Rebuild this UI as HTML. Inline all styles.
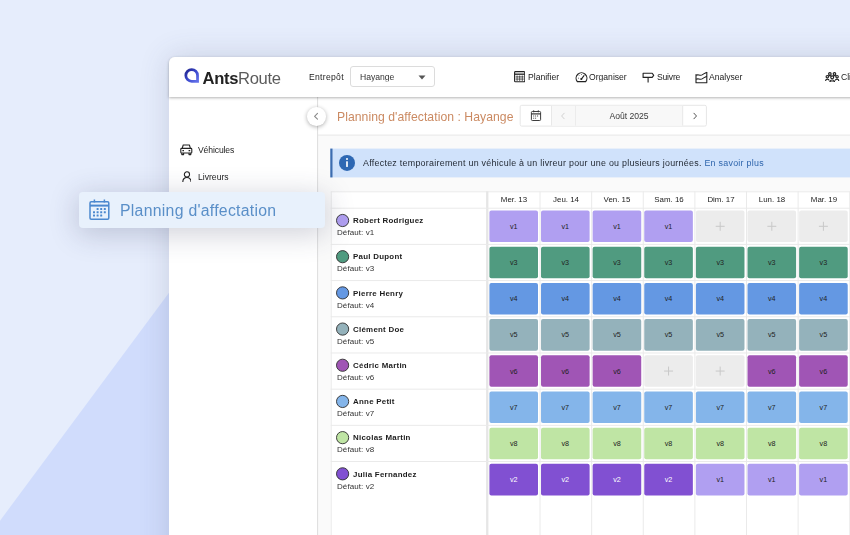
<!DOCTYPE html>
<html lang="fr"><head><meta charset="utf-8"><title>AntsRoute - Planning d'affectation</title>
<style>
*{box-sizing:border-box;margin:0;padding:0}
html,body{width:850px;height:535px;overflow:hidden}
body{background:#e6edfc;font-family:"Liberation Sans",sans-serif;color:#222;position:relative}
.bg{position:absolute;left:0;top:0;width:850px;height:535px}
.win{position:absolute;left:168.8px;top:56.5px;width:720px;height:520px;background:#fff;border-top-left-radius:6px;box-shadow:0 0 30px 0 rgba(70,72,105,.19)}
.hdr{position:absolute;left:168.8px;top:56.5px;width:720px;height:40.5px;background:#fff;border-top-left-radius:6px;box-shadow:0 1px 3px rgba(0,0,0,.30)}
.a{position:absolute}
.t{position:absolute;white-space:nowrap;line-height:1;transform:translateY(-52%);will-change:transform}
.c{position:absolute;white-space:nowrap;line-height:1;transform:translate(-50%,-52%);will-change:transform}
.nav{font-size:8.6px;color:#222}
.cell{position:absolute;border-radius:2px;width:48.6px;height:31.6px}
.cell span{position:absolute;left:50%;top:50%;transform:translate(-50%,-54%);font-size:7px;line-height:1;white-space:nowrap}
.plus{background:#ebebeb}
.plus i{position:absolute;left:50%;top:50%;width:9px;height:9px;transform:translate(-50%,-50%)}
.plus i:before,.plus i:after{content:"";position:absolute;background:#c4c4c4}
.plus i:before{left:0;top:4px;width:9px;height:1px}
.plus i:after{left:4px;top:0;width:1px;height:9px}
.hl{position:absolute;background:#e6e6e6;height:1px}
.vl{position:absolute;background:#e6e6e6;width:1px}
.av{position:absolute;width:13px;height:13px;border-radius:50%;border:1px solid #333}
.nm{font-weight:bold;font-size:7.9px;letter-spacing:.27px;color:#1c1c1c}
.df{font-size:8px;letter-spacing:.08px;color:#333}
.dh{font-size:7.9px;color:#222}
</style></head><body>
<svg class="bg" viewBox="0 0 850 535"><polygon points="0,520.7 168.8,293 400,293 400,535 0,535" fill="#d0dcfc"/></svg>
<div class="win"></div>
<!-- content area -->
<svg class="bg" viewBox="0 0 850 535">
<rect x="318" y="135.5" width="540" height="420" fill="#fafafa"/>
<rect x="317.1" y="97" width="1" height="440" fill="#dddddd"/>
<rect x="318" y="134.6" width="540" height="1" fill="#e6e6e6"/>
<rect x="330.3" y="148.6" width="530" height="28.8" fill="#d0e2fb"/>
<rect x="330.3" y="148.6" width="2.2" height="28.8" fill="#3d6db0"/>
<circle cx="347" cy="162.9" r="8" fill="#2e68b3"/>
<circle cx="347" cy="159" r="1" fill="#fff"/>
<rect x="346.15" y="161.2" width="1.7" height="5.8" rx=".4" fill="#fff"/>
</svg>

<div class="a" style="left:307.2px;top:107.4px;width:18.6px;height:18.6px;border-radius:50%;background:#fff;box-shadow:0 1px 4px rgba(0,0,0,.32)">
<svg class="a" style="left:0;top:0" width="18.6" height="18.6" viewBox="0 0 18.6 18.6"><path d="M10.5 6.4 L7.6 9.3 L10.5 12.2" fill="none" stroke="#8a8a8a" stroke-width="1.1" stroke-linecap="round" stroke-linejoin="round"/></svg></div>
<div class="t" id="title" style="left:337.2px;top:117px;font-size:12.2px;letter-spacing:.05px;color:#cb8a62">Planning d'affectation : Hayange</div>
<svg class="bg" viewBox="0 0 850 535">
<rect x="520.2" y="105.3" width="186.2" height="20.8" rx="1.5" fill="#fff" stroke="#e6e6e6" stroke-width="1"/>
<rect x="551.5" y="105.8" width="131.2" height="19.8" fill="#f8f8f8"/>
<rect x="551" y="105.8" width="1" height="19.8" fill="#e8e8e8"/>
<rect x="575" y="105.8" width="1" height="19.8" fill="#ececec"/>
<rect x="682.2" y="105.8" width="1" height="19.8" fill="#e8e8e8"/>
<g fill="none" stroke="#333" stroke-width=".95"><rect x="531.4" y="111.5" width="9.2" height="9" rx=".9"/><path d="M531.4 113.9H540.6" stroke-width="1.2"/><path d="M533.7 110.3V112.3M538.3 110.3V112.3"/><path d="M533.2 116H539M533.2 118.2H537" stroke-width=".9" stroke-dasharray="1 .9"/></g>
<path d="M564.2 113.2 L561.6 116 L564.2 118.8" fill="none" stroke="#d2d2d2" stroke-width="1" stroke-linecap="round" stroke-linejoin="round"/>
<path d="M693.9 113.2 L696.5 116 L693.9 118.8" fill="none" stroke="#555" stroke-width="1" stroke-linecap="round" stroke-linejoin="round"/>
</svg>
<div class="c" id="aout" style="left:629px;top:116.1px;font-size:8.6px;color:#3a3a3a">Août 2025</div>

<div class="t" id="info" style="left:363.1px;top:164.4px;font-size:8.9px;letter-spacing:.27px;color:#1f2630">Affectez temporairement un véhicule à un livreur pour une ou plusieurs journées. <span id="esp" style="color:#2f66ad">En savoir plus</span></div>

<svg class="bg" viewBox="0 0 850 535" style="font-family:'Liberation Sans',sans-serif">
<rect x="330.7" y="191.3" width="540" height="360" fill="#fff"/>
<rect x="330.7" y="191.3" width="540" height="1" fill="#eaeaea"/>
<rect x="330.7" y="191.3" width="1" height="360" fill="#eaeaea"/>
<rect x="486.1" y="191.3" width="2.3" height="360" fill="#e6e6e6"/>
<rect x="539.52" y="191.3" width="1" height="360" fill="#eaeaea"/>
<rect x="591.14" y="191.3" width="1" height="360" fill="#eaeaea"/>
<rect x="642.76" y="191.3" width="1" height="360" fill="#eaeaea"/>
<rect x="694.38" y="191.3" width="1" height="360" fill="#eaeaea"/>
<rect x="746.00" y="191.3" width="1" height="360" fill="#eaeaea"/>
<rect x="797.62" y="191.3" width="1" height="360" fill="#eaeaea"/>
<rect x="849.24" y="191.3" width="1" height="360" fill="#eaeaea"/>
<rect x="330.7" y="207.70" width="540" height="1" fill="#eaeaea"/>
<rect x="330.7" y="243.89" width="540" height="1" fill="#eaeaea"/>
<rect x="330.7" y="280.08" width="540" height="1" fill="#eaeaea"/>
<rect x="330.7" y="316.27" width="540" height="1" fill="#eaeaea"/>
<rect x="330.7" y="352.46" width="540" height="1" fill="#eaeaea"/>
<rect x="330.7" y="388.65" width="540" height="1" fill="#eaeaea"/>
<rect x="330.7" y="424.84" width="540" height="1" fill="#eaeaea"/>
<rect x="330.7" y="461.03" width="540" height="1" fill="#eaeaea"/>
<circle cx="342.6" cy="220.50" r="6.1" fill="#b09ff1" stroke="#2e2e2e" stroke-width="0.9"/>
<rect x="489.40" y="210.50" width="48.6" height="31.6" rx="2" fill="#b09ff1"/>
<text x="513.70" y="228.90" text-anchor="middle" font-size="7.2" fill="#222">v1</text>
<rect x="541.02" y="210.50" width="48.6" height="31.6" rx="2" fill="#b09ff1"/>
<text x="565.32" y="228.90" text-anchor="middle" font-size="7.2" fill="#222">v1</text>
<rect x="592.64" y="210.50" width="48.6" height="31.6" rx="2" fill="#b09ff1"/>
<text x="616.94" y="228.90" text-anchor="middle" font-size="7.2" fill="#222">v1</text>
<rect x="644.26" y="210.50" width="48.6" height="31.6" rx="2" fill="#b09ff1"/>
<text x="668.56" y="228.90" text-anchor="middle" font-size="7.2" fill="#222">v1</text>
<rect x="695.88" y="210.50" width="48.6" height="31.6" rx="2" fill="#ececec"/>
<path d="M715.68 226.30H724.68M720.18 221.80V230.80" stroke="#c9c9c9" stroke-width="1" fill="none"/>
<rect x="747.50" y="210.50" width="48.6" height="31.6" rx="2" fill="#ececec"/>
<path d="M767.30 226.30H776.30M771.80 221.80V230.80" stroke="#c9c9c9" stroke-width="1" fill="none"/>
<rect x="799.12" y="210.50" width="48.6" height="31.6" rx="2" fill="#ececec"/>
<path d="M818.92 226.30H827.92M823.42 221.80V230.80" stroke="#c9c9c9" stroke-width="1" fill="none"/>
<circle cx="342.6" cy="256.69" r="6.1" fill="#509b80" stroke="#2e2e2e" stroke-width="0.9"/>
<rect x="489.40" y="246.69" width="48.6" height="31.6" rx="2" fill="#509b80"/>
<text x="513.70" y="265.09" text-anchor="middle" font-size="7.2" fill="#222">v3</text>
<rect x="541.02" y="246.69" width="48.6" height="31.6" rx="2" fill="#509b80"/>
<text x="565.32" y="265.09" text-anchor="middle" font-size="7.2" fill="#222">v3</text>
<rect x="592.64" y="246.69" width="48.6" height="31.6" rx="2" fill="#509b80"/>
<text x="616.94" y="265.09" text-anchor="middle" font-size="7.2" fill="#222">v3</text>
<rect x="644.26" y="246.69" width="48.6" height="31.6" rx="2" fill="#509b80"/>
<text x="668.56" y="265.09" text-anchor="middle" font-size="7.2" fill="#222">v3</text>
<rect x="695.88" y="246.69" width="48.6" height="31.6" rx="2" fill="#509b80"/>
<text x="720.18" y="265.09" text-anchor="middle" font-size="7.2" fill="#222">v3</text>
<rect x="747.50" y="246.69" width="48.6" height="31.6" rx="2" fill="#509b80"/>
<text x="771.80" y="265.09" text-anchor="middle" font-size="7.2" fill="#222">v3</text>
<rect x="799.12" y="246.69" width="48.6" height="31.6" rx="2" fill="#509b80"/>
<text x="823.42" y="265.09" text-anchor="middle" font-size="7.2" fill="#222">v3</text>
<circle cx="342.6" cy="292.88" r="6.1" fill="#6498e3" stroke="#2e2e2e" stroke-width="0.9"/>
<rect x="489.40" y="282.88" width="48.6" height="31.6" rx="2" fill="#6498e3"/>
<text x="513.70" y="301.28" text-anchor="middle" font-size="7.2" fill="#222">v4</text>
<rect x="541.02" y="282.88" width="48.6" height="31.6" rx="2" fill="#6498e3"/>
<text x="565.32" y="301.28" text-anchor="middle" font-size="7.2" fill="#222">v4</text>
<rect x="592.64" y="282.88" width="48.6" height="31.6" rx="2" fill="#6498e3"/>
<text x="616.94" y="301.28" text-anchor="middle" font-size="7.2" fill="#222">v4</text>
<rect x="644.26" y="282.88" width="48.6" height="31.6" rx="2" fill="#6498e3"/>
<text x="668.56" y="301.28" text-anchor="middle" font-size="7.2" fill="#222">v4</text>
<rect x="695.88" y="282.88" width="48.6" height="31.6" rx="2" fill="#6498e3"/>
<text x="720.18" y="301.28" text-anchor="middle" font-size="7.2" fill="#222">v4</text>
<rect x="747.50" y="282.88" width="48.6" height="31.6" rx="2" fill="#6498e3"/>
<text x="771.80" y="301.28" text-anchor="middle" font-size="7.2" fill="#222">v4</text>
<rect x="799.12" y="282.88" width="48.6" height="31.6" rx="2" fill="#6498e3"/>
<text x="823.42" y="301.28" text-anchor="middle" font-size="7.2" fill="#222">v4</text>
<circle cx="342.6" cy="329.07" r="6.1" fill="#94b2bb" stroke="#2e2e2e" stroke-width="0.9"/>
<rect x="489.40" y="319.07" width="48.6" height="31.6" rx="2" fill="#94b2bb"/>
<text x="513.70" y="337.47" text-anchor="middle" font-size="7.2" fill="#222">v5</text>
<rect x="541.02" y="319.07" width="48.6" height="31.6" rx="2" fill="#94b2bb"/>
<text x="565.32" y="337.47" text-anchor="middle" font-size="7.2" fill="#222">v5</text>
<rect x="592.64" y="319.07" width="48.6" height="31.6" rx="2" fill="#94b2bb"/>
<text x="616.94" y="337.47" text-anchor="middle" font-size="7.2" fill="#222">v5</text>
<rect x="644.26" y="319.07" width="48.6" height="31.6" rx="2" fill="#94b2bb"/>
<text x="668.56" y="337.47" text-anchor="middle" font-size="7.2" fill="#222">v5</text>
<rect x="695.88" y="319.07" width="48.6" height="31.6" rx="2" fill="#94b2bb"/>
<text x="720.18" y="337.47" text-anchor="middle" font-size="7.2" fill="#222">v5</text>
<rect x="747.50" y="319.07" width="48.6" height="31.6" rx="2" fill="#94b2bb"/>
<text x="771.80" y="337.47" text-anchor="middle" font-size="7.2" fill="#222">v5</text>
<rect x="799.12" y="319.07" width="48.6" height="31.6" rx="2" fill="#94b2bb"/>
<text x="823.42" y="337.47" text-anchor="middle" font-size="7.2" fill="#222">v5</text>
<circle cx="342.6" cy="365.26" r="6.1" fill="#a055b5" stroke="#2e2e2e" stroke-width="0.9"/>
<rect x="489.40" y="355.26" width="48.6" height="31.6" rx="2" fill="#a055b5"/>
<text x="513.70" y="373.66" text-anchor="middle" font-size="7.2" fill="#222">v6</text>
<rect x="541.02" y="355.26" width="48.6" height="31.6" rx="2" fill="#a055b5"/>
<text x="565.32" y="373.66" text-anchor="middle" font-size="7.2" fill="#222">v6</text>
<rect x="592.64" y="355.26" width="48.6" height="31.6" rx="2" fill="#a055b5"/>
<text x="616.94" y="373.66" text-anchor="middle" font-size="7.2" fill="#222">v6</text>
<rect x="644.26" y="355.26" width="48.6" height="31.6" rx="2" fill="#ececec"/>
<path d="M664.06 371.06H673.06M668.56 366.56V375.56" stroke="#c9c9c9" stroke-width="1" fill="none"/>
<rect x="695.88" y="355.26" width="48.6" height="31.6" rx="2" fill="#ececec"/>
<path d="M715.68 371.06H724.68M720.18 366.56V375.56" stroke="#c9c9c9" stroke-width="1" fill="none"/>
<rect x="747.50" y="355.26" width="48.6" height="31.6" rx="2" fill="#a055b5"/>
<text x="771.80" y="373.66" text-anchor="middle" font-size="7.2" fill="#222">v6</text>
<rect x="799.12" y="355.26" width="48.6" height="31.6" rx="2" fill="#a055b5"/>
<text x="823.42" y="373.66" text-anchor="middle" font-size="7.2" fill="#222">v6</text>
<circle cx="342.6" cy="401.45" r="6.1" fill="#84b5ea" stroke="#2e2e2e" stroke-width="0.9"/>
<rect x="489.40" y="391.45" width="48.6" height="31.6" rx="2" fill="#84b5ea"/>
<text x="513.70" y="409.85" text-anchor="middle" font-size="7.2" fill="#222">v7</text>
<rect x="541.02" y="391.45" width="48.6" height="31.6" rx="2" fill="#84b5ea"/>
<text x="565.32" y="409.85" text-anchor="middle" font-size="7.2" fill="#222">v7</text>
<rect x="592.64" y="391.45" width="48.6" height="31.6" rx="2" fill="#84b5ea"/>
<text x="616.94" y="409.85" text-anchor="middle" font-size="7.2" fill="#222">v7</text>
<rect x="644.26" y="391.45" width="48.6" height="31.6" rx="2" fill="#84b5ea"/>
<text x="668.56" y="409.85" text-anchor="middle" font-size="7.2" fill="#222">v7</text>
<rect x="695.88" y="391.45" width="48.6" height="31.6" rx="2" fill="#84b5ea"/>
<text x="720.18" y="409.85" text-anchor="middle" font-size="7.2" fill="#222">v7</text>
<rect x="747.50" y="391.45" width="48.6" height="31.6" rx="2" fill="#84b5ea"/>
<text x="771.80" y="409.85" text-anchor="middle" font-size="7.2" fill="#222">v7</text>
<rect x="799.12" y="391.45" width="48.6" height="31.6" rx="2" fill="#84b5ea"/>
<text x="823.42" y="409.85" text-anchor="middle" font-size="7.2" fill="#222">v7</text>
<circle cx="342.6" cy="437.64" r="6.1" fill="#bfe5a4" stroke="#2e2e2e" stroke-width="0.9"/>
<rect x="489.40" y="427.64" width="48.6" height="31.6" rx="2" fill="#bfe5a4"/>
<text x="513.70" y="446.04" text-anchor="middle" font-size="7.2" fill="#222">v8</text>
<rect x="541.02" y="427.64" width="48.6" height="31.6" rx="2" fill="#bfe5a4"/>
<text x="565.32" y="446.04" text-anchor="middle" font-size="7.2" fill="#222">v8</text>
<rect x="592.64" y="427.64" width="48.6" height="31.6" rx="2" fill="#bfe5a4"/>
<text x="616.94" y="446.04" text-anchor="middle" font-size="7.2" fill="#222">v8</text>
<rect x="644.26" y="427.64" width="48.6" height="31.6" rx="2" fill="#bfe5a4"/>
<text x="668.56" y="446.04" text-anchor="middle" font-size="7.2" fill="#222">v8</text>
<rect x="695.88" y="427.64" width="48.6" height="31.6" rx="2" fill="#bfe5a4"/>
<text x="720.18" y="446.04" text-anchor="middle" font-size="7.2" fill="#222">v8</text>
<rect x="747.50" y="427.64" width="48.6" height="31.6" rx="2" fill="#bfe5a4"/>
<text x="771.80" y="446.04" text-anchor="middle" font-size="7.2" fill="#222">v8</text>
<rect x="799.12" y="427.64" width="48.6" height="31.6" rx="2" fill="#bfe5a4"/>
<text x="823.42" y="446.04" text-anchor="middle" font-size="7.2" fill="#222">v8</text>
<circle cx="342.6" cy="473.83" r="6.1" fill="#8150d2" stroke="#2e2e2e" stroke-width="0.9"/>
<rect x="489.40" y="463.83" width="48.6" height="31.6" rx="2" fill="#8150d2"/>
<text x="513.70" y="482.23" text-anchor="middle" font-size="7.2" fill="#fff">v2</text>
<rect x="541.02" y="463.83" width="48.6" height="31.6" rx="2" fill="#8150d2"/>
<text x="565.32" y="482.23" text-anchor="middle" font-size="7.2" fill="#fff">v2</text>
<rect x="592.64" y="463.83" width="48.6" height="31.6" rx="2" fill="#8150d2"/>
<text x="616.94" y="482.23" text-anchor="middle" font-size="7.2" fill="#fff">v2</text>
<rect x="644.26" y="463.83" width="48.6" height="31.6" rx="2" fill="#8150d2"/>
<text x="668.56" y="482.23" text-anchor="middle" font-size="7.2" fill="#fff">v2</text>
<rect x="695.88" y="463.83" width="48.6" height="31.6" rx="2" fill="#b09ff1"/>
<text x="720.18" y="482.23" text-anchor="middle" font-size="7.2" fill="#222">v1</text>
<rect x="747.50" y="463.83" width="48.6" height="31.6" rx="2" fill="#b09ff1"/>
<text x="771.80" y="482.23" text-anchor="middle" font-size="7.2" fill="#222">v1</text>
<rect x="799.12" y="463.83" width="48.6" height="31.6" rx="2" fill="#b09ff1"/>
<text x="823.42" y="482.23" text-anchor="middle" font-size="7.2" fill="#222">v1</text>
</svg>
<div class="c dh" style="left:514.21px;top:200px">Mer. 13</div>
<div class="c dh" style="left:565.83px;top:200px">Jeu. 14</div>
<div class="c dh" style="left:617.45px;top:200px">Ven. 15</div>
<div class="c dh" style="left:669.07px;top:200px">Sam. 16</div>
<div class="c dh" style="left:720.69px;top:200px">Dim. 17</div>
<div class="c dh" style="left:772.31px;top:200px">Lun. 18</div>
<div class="c dh" style="left:823.93px;top:200px">Mar. 19</div>
<div class="t nm" style="left:352.6px;top:221.30px">Robert Rodriguez</div>
<div class="t df" style="left:336.8px;top:233.20px">Défaut: v1</div>
<div class="t nm" style="left:352.6px;top:257.49px">Paul Dupont</div>
<div class="t df" style="left:336.8px;top:269.39px">Défaut: v3</div>
<div class="t nm" style="left:352.6px;top:293.68px">Pierre Henry</div>
<div class="t df" style="left:336.8px;top:305.58px">Défaut: v4</div>
<div class="t nm" style="left:352.6px;top:329.87px">Clément Doe</div>
<div class="t df" style="left:336.8px;top:341.77px">Défaut: v5</div>
<div class="t nm" style="left:352.6px;top:366.06px">Cédric Martin</div>
<div class="t df" style="left:336.8px;top:377.96px">Défaut: v6</div>
<div class="t nm" style="left:352.6px;top:402.25px">Anne Petit</div>
<div class="t df" style="left:336.8px;top:414.15px">Défaut: v7</div>
<div class="t nm" style="left:352.6px;top:438.44px">Nicolas Martin</div>
<div class="t df" style="left:336.8px;top:450.34px">Défaut: v8</div>
<div class="t nm" style="left:352.6px;top:474.63px">Julia Fernandez</div>
<div class="t df" style="left:336.8px;top:486.53px">Défaut: v2</div>
<div class="hdr"></div>
<svg class="a" style="left:183.5px;top:68px" width="16" height="15" viewBox="0 0 16 15"><defs><linearGradient id="lg" x1="0" y1="0" x2="1" y2="1"><stop offset="0.1" stop-color="#262c9a"/><stop offset="0.5" stop-color="#3a48cc"/><stop offset="0.95" stop-color="#606ee8"/></linearGradient></defs><path d="M7.7 1.55 A5.85 5.85 0 1 0 7.7 13.25 L13.55 13.25 L13.55 7.4 A5.85 5.85 0 0 0 7.7 1.55 Z" fill="none" stroke="url(#lg)" stroke-width="2.75"/></svg>
<div class="a" id="logo" style="left:202.6px;top:68.7px;font-size:16.6px;line-height:20px;white-space:nowrap;letter-spacing:-.36px"><b style="color:#222">Ants</b><span style="color:#5c5c5c">Route</span></div>
<div class="t nav" id="ent" style="left:308.6px;top:76.6px;letter-spacing:.3px">Entrepôt</div>
<div class="a" style="left:349.5px;top:65.8px;width:85.2px;height:21.6px;border:1px solid #dcdcdc;border-radius:3px;background:#fff"></div>
<div class="t nav" id="hay" style="left:359.8px;top:76.6px;color:#333">Hayange</div>
<svg class="a" style="left:417.5px;top:74.5px" width="8" height="5" viewBox="0 0 8 5"><path d="M0.5 0.5H7.5L4 4.5Z" fill="#555"/></svg>

<svg class="a" style="left:513.6px;top:71.3px" width="11.4" height="11.4" viewBox="0 0 11.4 11.4"><rect x="0.6" y="0.6" width="10.2" height="10.2" rx="0.8" fill="none" stroke="#222" stroke-width="1.1"/><path d="M0.6 3.2H10.8" stroke="#222" stroke-width="1.3"/><path d="M3.1 4.5V10M5.7 4.5V10M8.3 4.5V10M1.6 5.9H9.8M1.6 8.1H9.8" stroke="#222" stroke-width=".7"/></svg>
<div class="t nav" id="n1" style="left:527.5px;top:76.7px">Planifier</div>
<svg class="a" style="left:574.6px;top:70.6px" width="13" height="12" viewBox="0 0 13 12"><path d="M2.3 10.6 A5.4 5.4 0 1 1 10.7 10.6 Z" fill="none" stroke="#222" stroke-width="1.1" stroke-linejoin="round"/><path d="M6.5 7.8 L9 4.6" stroke="#222" stroke-width="1.1" stroke-linecap="round"/><circle cx="6.3" cy="8" r="1.1" fill="#222"/><path d="M3 7.2H3.9M4.1 4.4L4.7 5M6.5 3.2V4" stroke="#222" stroke-width=".7"/></svg>
<div class="t nav" id="n2" style="left:588.7px;top:76.7px">Organiser</div>
<svg class="a" style="left:642.4px;top:70.6px" width="13" height="13" viewBox="0 0 13 13"><path d="M1.1 2.3H10.2L11.7 4.4L10.2 6.4H1.1Z" fill="none" stroke="#222" stroke-width="1.1" stroke-linejoin="round"/><path d="M6.1 6.4V11.4" stroke="#222" stroke-width="1.1"/></svg>
<div class="t nav" id="n3" style="left:656.6px;top:76.7px;letter-spacing:-.2px">Suivre</div>
<svg class="a" style="left:695.4px;top:70.6px" width="13" height="13" viewBox="0 0 13 13"><path d="M1 3.2V11.8H11.8V1" fill="none" stroke="#222" stroke-width="1.1" stroke-linejoin="round"/><path d="M1 4.2C3.5 2.8 5 5.6 7.6 3.6C9.4 2.2 10.4 2.4 11.8 1.3" fill="none" stroke="#222" stroke-width="1.1"/><path d="M1 8.2C3.5 6.8 5 9.6 7.6 7.6C9.4 6.2 10.4 6.4 11.8 5.3" fill="none" stroke="#222" stroke-width="1.1"/></svg>
<div class="t nav" id="n4" style="left:709px;top:76.7px">Analyser</div>
<svg class="a" style="left:825.4px;top:71.6px" width="14.4" height="10.4" viewBox="0 0 14.4 10.4"><g fill="none" stroke="#1e1e1e" stroke-width="1.15" stroke-linejoin="round"><circle cx="4.9" cy="1.9" r="1.25"/><circle cx="9.5" cy="1.9" r="1.25"/><circle cx="2.3" cy="4.7" r="1.2"/><circle cx="12.1" cy="4.7" r="1.2"/><circle cx="7.2" cy="5.3" r="1.45"/><path d="M0.6 9C0.6 6.6 4 6.6 4 8.6M10.4 8.6C10.4 6.6 13.8 6.6 13.8 9M4.9 10C4.9 7.3 9.5 7.3 9.5 10Z"/><path d="M3.4 4.1C3.9 3.4 5.6 3.4 6.2 4M8.2 4C8.8 3.4 10.5 3.4 11 4.1"/></g></svg>
<div class="t nav" id="n5" style="left:840.8px;top:76.7px">Clients</div>

<svg class="a" style="left:180px;top:144.2px" width="12.6" height="11.4" viewBox="0 0 12.6 11.4"><g fill="none" stroke="#222" stroke-width="1.1" stroke-linejoin="round"><path d="M2.2 4.4L3.2 1H9.4L10.4 4.4"/><rect x="0.8" y="4.4" width="11" height="4.6" rx="0.8"/><path d="M1.8 9V10.6H3.6V9M9 9V10.6H10.8V9"/></g><path d="M2.4 6.6H4M8.6 6.6H10.2" stroke="#222" stroke-width="1.1"/></svg>
<div class="t nav" id="s1" style="left:197.7px;top:149.8px;letter-spacing:-.12px">Véhicules</div>
<svg class="a" style="left:181.6px;top:170.9px" width="9.9" height="11.2" viewBox="0 0 11 12.4"><g fill="none" stroke="#222" stroke-width="1.2"><circle cx="5.5" cy="3.8" r="2.9"/><path d="M0.9 12.2C0.9 5.6 10.1 5.6 10.1 12.2"/></g></svg>
<div class="t nav" id="s2" style="left:197.7px;top:176.8px">Livreurs</div>
<div class="a" style="left:79.2px;top:192px;width:246px;height:35.6px;border-radius:4px;background:#e8f1fc;box-shadow:0 5px 28px 2px rgba(50,55,90,.22)"></div>
<svg class="a" style="left:88.8px;top:198.8px" width="20.8" height="21.2" viewBox="0 0 20.8 21.2"><g fill="none" stroke="#4b88cf" stroke-width="1.5"><rect x="1" y="2.8" width="18.8" height="17.4" rx="1.2"/><path d="M1 6.6H19.8" stroke-width="2"/><path d="M5.4 0.6V3.6M15.4 0.6V3.6"/></g><g fill="#4b88cf"><rect x="7.6" y="9.0" width="2" height="2" rx=".3"/><rect x="11.2" y="9.0" width="2" height="2" rx=".3"/><rect x="14.8" y="9.0" width="2" height="2" rx=".3"/><rect x="4.0" y="12.3" width="2" height="2" rx=".3"/><rect x="7.6" y="12.3" width="2" height="2" rx=".3"/><rect x="11.2" y="12.3" width="2" height="2" rx=".3"/><rect x="14.8" y="12.3" width="2" height="2" rx=".3"/><rect x="4.0" y="15.6" width="2" height="2" rx=".3"/><rect x="7.6" y="15.6" width="2" height="2" rx=".3"/><rect x="11.2" y="15.6" width="2" height="2" rx=".3"/></g></svg>
<div class="t" id="pill" style="left:120px;top:210.8px;font-size:15.8px;letter-spacing:.28px;color:#5a8fc8">Planning d'affectation</div>
</body></html>
